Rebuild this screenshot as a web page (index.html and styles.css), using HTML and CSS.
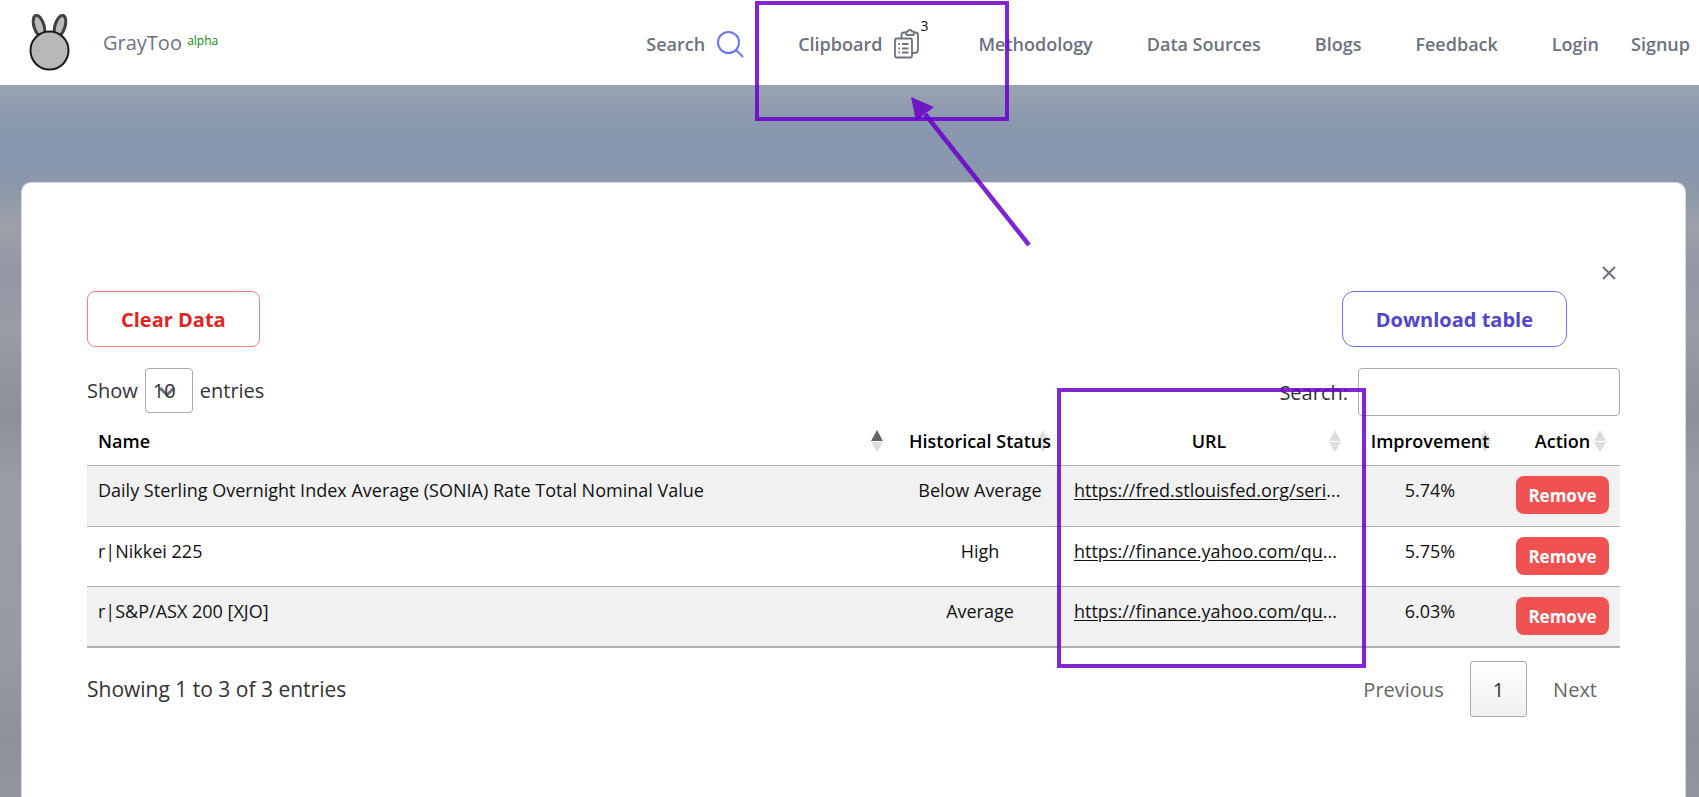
FILE: index.html
```
<!DOCTYPE html>
<html lang="en">

<head>
  <meta charset="UTF-8">
  <meta name="viewport" content="width=device-width, initial-scale=1.0">
  <title>GrayToo - Clipboard</title>
  <link rel="stylesheet" href="styles.css">
</head>

<body>
  <header class="header">
    <a href="#" class="brand">
      <svg class="logo" width="42" height="58" viewBox="0 0 42 58" aria-hidden="true">
        <g fill="#b9bbba" stroke="#3f4142" stroke-width="3">
          <ellipse cx="10" cy="12" rx="5" ry="11" transform="rotate(-17 10 12)" />
          <ellipse cx="31" cy="12" rx="5" ry="11" transform="rotate(17 31 12)" />
        </g>
        <circle cx="20.500" cy="36.500" r="19" fill="#b7b9b8" stroke="#1c1c1c" stroke-width="2" />
      </svg>
      <span class="brand-name">GrayToo <sup class="alpha">alpha</sup></span>
    </a>
    <nav class="nav">
      <a href="#">Search
        <svg width="27" height="27" viewBox="0 0 27 27" fill="none" stroke="#6875f5" stroke-width="2" aria-hidden="true">
          <circle cx="11.500" cy="11.500" r="10.500" />
          <path d="M18.500 18.500L26 26" />
        </svg>
      </a>
      <a href="#" class="clipboard">Clipboard
        <svg width="26" height="30" viewBox="0 0 26 30" fill="none" stroke="#6b7280" stroke-width="1.800" aria-hidden="true">
          <rect x="1" y="9.500" width="17" height="19" rx="1.500" />
          <path d="M7.500 9.500V6q0-2.500 2.500-2.500H12M19 3.500h2.500q2.500 0 2.500 2.500V20.500q0 3.500-3 3.500h-3" />
          <path d="M12 3.500q0-1 1-1h1q.5-1.500 2-1.500t2 1.500h1q1 0 1 1V5q0 1-1 1h-6q-1 0-1-1z" />
          <path d="M4.500 15h1.500M8 15h6.500M4.500 19.500h1.500M8 19.500h6.500M4.500 23.500h1.500M8 23.500h6.500" />
        </svg>
        <sup class="count">3</sup>
      </a>
      <a href="#">Methodology</a>
      <a href="#">Data Sources</a>
      <a href="#">Blogs</a>
      <a href="#">Feedback</a>
      <div class="account">
        <a href="#">Login</a>
        <a href="#">Signup</a>
      </div>
    </nav>
  </header>

  <main class="modal">
    <div class="close-row">
      <button type="button" class="close" aria-label="Close">
        <svg width="14" height="14" viewBox="0 0 14 14" stroke="#6b7280" stroke-width="2">
          <path d="M1 1L13 13M13 1L1 13" />
        </svg>
      </button>
    </div>
    <div class="actions">
      <button type="button" class="btn clear">Clear Data</button>
      <button type="button" class="btn download">Download table</button>
    </div>
    <div class="controls">
      <label class="length">Show
        <select name="length">
          <option>10</option>
          <option>25</option>
          <option>50</option>
        </select>
        entries
      </label>
      <label class="filter">Search:
        <input type="search" name="filter">
      </label>
    </div>

    <table class="data">
      <thead>
        <tr>
          <th class="name sort-asc">Name</th>
          <th class="status">Historical Status</th>
          <th class="url">URL</th>
          <th class="improvement">Improvement</th>
          <th class="action">Action</th>
        </tr>
      </thead>
      <tbody>
        <tr>
          <td class="name">Daily Sterling Overnight Index Average (SONIA) Rate Total Nominal Value</td>
          <td>Below Average</td>
          <td class="link"><a href="#">https://fred.stlouisfed.org/seri</a>...</td>
          <td>5.74%</td>
          <td><button type="button" class="remove">Remove</button></td>
        </tr>
        <tr>
          <td class="name">r|Nikkei 225</td>
          <td>High</td>
          <td class="link"><a href="#">https://finance.yahoo.com/qu</a>...</td>
          <td>5.75%</td>
          <td><button type="button" class="remove">Remove</button></td>
        </tr>
        <tr>
          <td class="name">r|S&amp;P/ASX 200 [XJO]</td>
          <td>Average</td>
          <td class="link"><a href="#">https://finance.yahoo.com/qu</a>...</td>
          <td>6.03%</td>
          <td><button type="button" class="remove">Remove</button></td>
        </tr>
      </tbody>
    </table>

    <div class="table-footer">
      <div class="info">Showing 1 to 3 of 3 entries</div>
      <div class="pages">
        <button type="button" class="page" disabled>Previous</button>
        <button type="button" class="page current">1</button>
        <button type="button" class="page" disabled>Next</button>
      </div>
    </div>
  </main>

  <!-- tutorial highlights -->
  <div class="mark mark-clipboard"></div>
  <div class="mark mark-url"></div>
  <svg class="arrow" width="124" height="152" viewBox="0 0 124 152" aria-hidden="true">
    <path d="M15 18L119 149" stroke="#6a00cc" stroke-width="4.500" />
    <path d="M1 1L24 11L16 17L6 25z" fill="#6a00cc" />
  </svg>
</body>

</html>
```
FILE: styles.css
```
* {
  box-sizing: border-box;
}

body {
  margin: 0;
  height: 100vh;
  display: flex;
  flex-direction: column;
  overflow: hidden;
  font-family: "Open Sans", "Noto Sans", sans-serif;
  font-size: 20px;
  color: #333;
  background: linear-gradient(#99a3b1 85px, #8a98ae 125px, #8997af 160px, #8c98aa 190px, #9da1a8 225px, #9496a6 272px, #999da5 330px, #8b9099 415px, #9a9da5 480px, #979ba4 650px, #8d919a 740px, #92969f);
}

button,
input,
select {
  font: inherit;
}

.header {
  flex: none;
  display: flex;
  justify-content: space-between;
  align-items: center;
  height: 85px;
  padding: 0 9px 0 29px;
  background-color: #fff;
  color: #6b7280;
}

.header a {
  color: inherit;
  text-decoration: none;
}

.brand {
  display: flex;
  align-items: center;
  gap: 32px;
}

.alpha {
  font-size: 12px;
  line-height: 1;
  vertical-align: 5px;
  color: #0a8a0a;
}

.nav {
  display: flex;
  align-items: center;
  gap: 54px;
  font-size: 18px;
  font-weight: 600;
  padding-top: 3px;
}

.nav > a {
  display: flex;
  align-items: center;
  gap: 12px;
}

.nav .clipboard {
  position: relative;
  padding-right: 4px;
}

.count {
  position: absolute;
  top: -12px;
  right: -4px;
  font-size: 14px;
  font-weight: 400;
  line-height: 18px;
  color: #111;
}

.account {
  display: flex;
  gap: 32px;
}

/* modal */
.modal {
  flex: 1;
  margin: 97px 13px 0 21px;
  padding: 80px 65px 0;
  background-color: #fff;
  border: 1px solid #d5d9e0;
  border-bottom: none;
  border-radius: 10px 10px 0 0;
}

.close-row {
  display: flex;
  justify-content: flex-end;
  height: 28px;
}

.close {
  display: flex;
  padding: 3px 4px;
  height: 20px;
  border: none;
  background: none;
  cursor: pointer;
}

.actions {
  display: flex;
  justify-content: space-between;
  padding-right: 53px;
}

.btn {
  height: 56px;
  padding: 0 33px;
  background-color: #fff;
  font-size: 20px;
  font-weight: 700;
  cursor: pointer;
}

.clear {
  border: 1px solid #f98080;
  border-radius: 8px;
  color: #e02424;
}

.download {
  border: 1px solid #6875f5;
  border-radius: 12px;
  color: #5145cd;
}

.controls {
  display: flex;
  justify-content: space-between;
  margin-top: 21px;
}

.length,
.filter {
  display: flex;
  align-items: center;
}

.length {
  gap: 7px;
  height: 45px;
}

.length select {
  appearance: none;
  width: 48px;
  height: 45px;
  padding: 0 7px;
  border: 1px solid #aaa;
  border-radius: 4px;
  color: #333;
  background: url("data:image/svg+xml,%3Csvg xmlns='http://www.w3.org/2000/svg' width='18' height='12' fill='none' stroke='%236b7280' stroke-width='3'%3E%3Cpath d='M2 2l7 7 7-7'/%3E%3C/svg%3E") no-repeat 12px 17px;
}

.filter {
  gap: 10px;
}

.filter input {
  width: 262px;
  height: 48px;
  padding: 5px;
  border: 1px solid #aaa;
  border-radius: 4px;
  background-color: transparent;
}

.data {
  width: 100%;
  table-layout: fixed;
  border-collapse: separate;
  border-spacing: 0;
  border-bottom: 2px solid #b0b0b0;
  font-size: 18px;
  color: #111;
  text-align: center;
}

.data th {
  position: relative;
  z-index: 0;
  height: 50px;
  padding: 0;
  border-bottom: 1px solid #b0b0b0;
  font-weight: 600;
  color: #000;
  white-space: nowrap;
}

/* sort arrows */
.data th::before,
.data th::after {
  content: "";
  position: absolute;
  z-index: -1;
  right: 14px;
  border: 6px solid transparent;
}

.data th::before {
  top: 14px;
  border-bottom: 11px solid #ddd;
  border-top-width: 0;
}

.data th::after {
  top: 26px;
  border-top: 10px solid #ddd;
  border-bottom-width: 0;
}

.data th.sort-asc::before {
  border-bottom-color: #666;
}

.status {
  width: 166px;
}

.url {
  width: 292px;
}

.improvement {
  width: 150px;
}

.action {
  width: 115px;
}

.data .name,
.data .link {
  padding-left: 11px;
  text-align: left;
}

.data td {
  height: 60px;
  padding: 10px 0;
  vertical-align: top;
  line-height: 28px;
  white-space: nowrap;
}

.data tr + tr td {
  border-top: 1px solid #b0b0b0;
}

.data tbody tr:nth-child(odd) {
  background-color: #f1f1f1;
}

.data td a {
  color: inherit;
  text-underline-offset: 2px;
}

.remove {
  height: 38px;
  width: 93px;
  padding: 2px 0 0;
  border: none;
  border-radius: 8px;
  background-color: #f05252;
  color: #fff;
  font-size: 17px;
  font-weight: 700;
  cursor: pointer;
}

.table-footer {
  display: flex;
  justify-content: space-between;
  align-items: center;
  margin-top: 13px;
}

.info {
  font-size: 21px;
}

.pages {
  display: flex;
  gap: 3px;
}

.page {
  height: 56px;
  padding: 0 22px;
  border: 1px solid transparent;
  border-radius: 3px;
  background: none;
  color: #666;
}

.page.current {
  border-color: #aaa;
  background: linear-gradient(#fff, #efefef);
  color: #333;
}

/* highlights */
.mark {
  position: absolute;
  border: 4px solid #6a00cc;
  opacity: 0.85;
}

.mark-clipboard {
  left: 755px;
  top: 1px;
  width: 254px;
  height: 120px;
}

.mark-url {
  left: 1057px;
  top: 388px;
  width: 309px;
  height: 280px;
}

.arrow {
  position: absolute;
  left: 910px;
  top: 96px;
  opacity: 0.85;
}
```
